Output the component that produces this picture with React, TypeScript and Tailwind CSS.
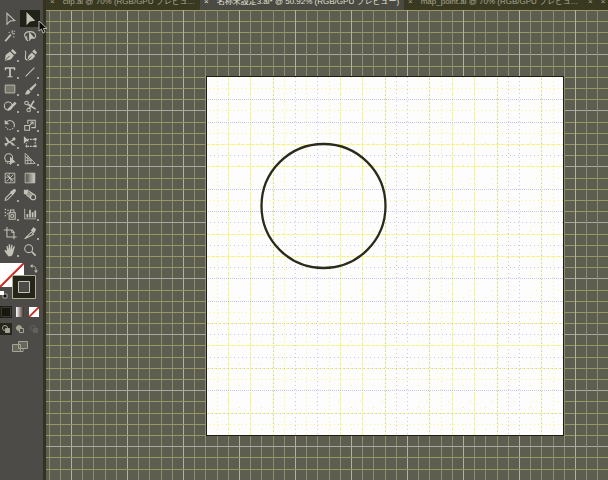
import type { ReactNode } from "react";

const UNIT = 11.2;
const BOARD = { x: 206, y: 77, size: 358 };

type Tool = { label: string; icon: ReactNode; more?: boolean; active?: boolean };

const line = { fill: "none", stroke: "currentColor", strokeWidth: 1.2 };

const groups: Tool[][] = [
  [
    { label: "Selection", icon: <path {...line} d="M4.500 1.500v12.500l3.500-3.600 5.500-.6z" /> },
    { label: "Direct selection", active: true, icon: <path d="M4 0v15l4-4.200 6-.8z" /> },
    {
      label: "Magic wand",
      icon: (
        <>
          <path {...line} strokeWidth="2" d="M2.500 14 9 6.500" />
          <path {...line} d="M10.500 1.500v3M13.500 5.500h-3M12.500 3l1-1M6.500 3.500l1 1M12 8.500l1 1" />
        </>
      ),
    },
    {
      label: "Lasso",
      icon: (
        <>
          <path {...line} d="M5 11C0 9 1 3 8 3s8 6.500 4 8M4.500 8.500c-2 2-1 4 1.500 5" />
          <path d="M7 3v11l2.500-2.800 4-.4z" />
        </>
      ),
    },
  ],
  [
    {
      label: "Pen",
      more: true,
      icon: (
        <>
          <path d="M2 14.500 3 8l5-4 4.500 4.500L9 13zM9 3l2-2 4.500 4.500-2 2z" />
          <path d="M2.500 14 7.500 9" stroke="#4c4b47" />
        </>
      ),
    },
    {
      label: "Curvature",
      icon: (
        <>
          <path d="M5 14.500 6 9l4-4 4 4-3.500 4zM10.500 4l2.500-2.500L16 5l-1.500 2.500z" />
          <path {...line} d="M4.500 14C0 12 5 8 2.500 3" />
          <path d="M5.500 14 9.500 9.500" stroke="#4c4b47" />
        </>
      ),
    },
    { label: "Type", more: true, icon: <path d="M2 2.500h12V6h-1.300l-.7-1.700H9v8.200l2 .5v1H5v-1l2-.5V4.300H4L3.300 6H2z" /> },
    { label: "Line segment", more: true, icon: <path {...line} d="M3 13 13 3" /> },
    {
      label: "Rectangle",
      more: true,
      icon: <path d="M2.500 3.500h11v9h-11z" fill="#77776a" stroke="currentColor" />,
    },
    {
      label: "Paintbrush",
      more: true,
      icon: <path d="M14.500 1.500 15.500 3 9.500 10 7 8zM6.200 8.500 8.700 11c-1 3-4 3.500-7 3 2-1 1.500-4.500 4.500-5.500z" />,
    },
    {
      label: "Shaper",
      more: true,
      icon: (
        <>
          <circle {...line} cx="6" cy="8" r="4.500" />
          <path d="M5 13.500 6 10.500 13.500 3l2 2L8 12.500z" />
        </>
      ),
    },
    {
      label: "Scissors",
      more: true,
      icon: (
        <>
          <circle {...line} cx="4" cy="4.500" r="2" />
          <circle {...line} cx="6.500" cy="12.500" r="2" />
          <path {...line} strokeWidth="1.800" d="m5.500 6 9 5.500M7 11l5.500-9" />
        </>
      ),
    },
  ],
  [
    {
      label: "Rotate",
      more: true,
      icon: (
        <>
          <path {...line} d="M4 4.500C8 1 13.500 4 13 9" />
          <path {...line} strokeDasharray="1.500 1.500" d="M13 9c-1 5-8 6-10 1" />
          <path d="M2 2v5h5z" />
        </>
      ),
    },
    {
      label: "Scale",
      more: true,
      icon: <path {...line} d="M2 8.500h5.500V14H2zM5.500 6.500v-4h8.500v8.500H9.500M7 9l4.500-4.500M8.500 4.500h3v3" />,
    },
    {
      label: "Width",
      more: true,
      icon: (
        <>
          <path d="M2 2c3 1 4 3 5 5 1.500 2 3 .5 4.500 2s1.500 2.500 3.500 3c-3 1-5-.5-6-2-1.500-1.500-3 0-4.500-2.500C3.500 5.500 3.500 4 2 2z" />
          <path {...line} d="M2 11.500 13 4.500" />
          <circle cx="12.500" cy="4.500" r="1.800" />
          <path d="M1.500 9.500 6 9l-2.500 4.500z" />
        </>
      ),
    },
    {
      label: "Free transform",
      icon: (
        <>
          <path {...line} strokeDasharray="2 1" d="M5 5h9v8H4V9" />
          <path d="M1 1v9l2.500-2.500L7 7zM13 3.500h2.500V6H13zM13 11.500h2.500V14H13zM3 12h2v2H3z" />
        </>
      ),
    },
    {
      label: "Shape builder",
      more: true,
      icon: (
        <>
          <circle {...line} cx="6.500" cy="6.500" r="4.500" />
          <path {...line} strokeDasharray="1.500 1" d="M3 10c1 4 7 4 9 1" />
          <path d="M8 5v10l2.500-2.800 4-.4z" />
        </>
      ),
    },
    {
      label: "Perspective grid",
      more: true,
      icon: <path {...line} strokeWidth="1" d="M2.500 1.500v12L14 13zM5.500 4v9.500M9 8v5.500M2.500 5.500l6 3M2.500 9.500H10" />,
    },
  ],
  [
    {
      label: "Mesh",
      icon: <path {...line} strokeWidth="1" d="M2.500 2.500h11v11h-11zM2.500 8c4-4 7 4 11 0M8 2.500c-4 4 4 7 0 11M4 4l8 8M12 4l-8 8" />,
    },
    {
      label: "Gradient",
      icon: <path d="M2.500 2.500h11v11h-11z" fill="url(#ramp)" stroke="currentColor" />,
    },
    {
      label: "Eyedropper",
      more: true,
      icon: (
        <>
          <path {...line} d="M2.500 14 3 11.500l6-6L11 7.500l-6 6z" />
          <path d="M8 4.500 9.500 3.500 12 1.500c2-1 3.500.5 2.500 2.500l-2 2.500-1 1.500z" />
        </>
      ),
    },
    {
      label: "Blend",
      icon: (
        <>
          <path d="M1 2h5v5H1z" />
          <path d="M5 5h5v5H5z" fill="#9a9a8c" />
          <circle {...line} cx="11.500" cy="10.500" r="3" />
          <path {...line} d="m6 3 7.500 5M3 7l6.500 5.500" />
        </>
      ),
    },
  ],
  [
    {
      label: "Symbol sprayer",
      more: true,
      icon: (
        <>
          <path {...line} d="M7 6.500h7v7.500H7zM8.500 6V3.500h4V6" />
          <circle {...line} cx="10.500" cy="10.300" r="1.800" />
          <path d="M2 2h1.500v1.500H2zM5 3h1.500v1.500H5zM2 5.500h1.500V7H2zM4.500 7H6v1.500H4.500zM2 9h1.500v1.500H2z" />
        </>
      ),
    },
    {
      label: "Column graph",
      more: true,
      icon: <path d="M1.500 2h1v11H15v1H1.500zM4 8h2v4H4zM7 3h2v9H7zM10 6h2v6h-2zM13 4h2v8h-2z" />,
    },
  ],
  [
    {
      label: "Artboard",
      icon: (
        <>
          <path {...line} d="M1 4.500h3.500M4.500 1v3.500h6l2 2.500v5.500h-8zM12.500 12.500h3M12.500 12.500v2.500" />
          <path {...line} strokeWidth="1" d="M10 4.500v3h3" />
        </>
      ),
    },
    {
      label: "Slice",
      more: true,
      icon: (
        <>
          <path {...line} d="M2 14.500 9.500 7l2.500 2.500z" />
          <path d="m9 5 3-4 3 3-2.500 4.500z" />
        </>
      ),
    },
    {
      label: "Hand",
      more: true,
      icon: (
        <path d="M4.500 9 4 3.500h1.200L6.500 7V1.500H8L8.500 7l1-5h1.300L10.500 7.500l2-4 1.200.5L12 10c-.5 3-1.500 4.500-3 5H6C4 12.500 3 11 1.500 8.500 2 7.500 3 7.700 4.500 9z" />
      ),
    },
    {
      label: "Zoom",
      icon: (
        <>
          <circle {...line} cx="6.500" cy="6.500" r="4.500" />
          <path {...line} strokeWidth="2" d="m10 10 4.500 4.500" />
        </>
      ),
    },
  ],
];

function ToolButton({ label, icon, more, active }: Tool) {
  return (
    <button
      type="button"
      aria-label={label}
      className={`relative flex h-[17px] w-5 items-center justify-center ${active ? "bg-[#222219]" : ""}`}
    >
      <svg viewBox="0 0 16 16" className="size-3.5" fill="currentColor">
        {icon}
      </svg>
      {more && <span className="absolute right-px bottom-px size-0.5 bg-[#a8a89a]" />}
    </button>
  );
}

function FillStroke() {
  return (
    <div className="relative h-11">
      <button type="button" aria-label="Fill" className="absolute top-[5px] left-0 h-6 w-6 bg-white">
        <svg viewBox="0 0 24 24" className="size-6">
          <path d="M0 24 24 0" stroke="#cc2a20" strokeWidth="2" />
        </svg>
      </button>
      <button type="button" aria-label="Swap fill and stroke" className="absolute top-[5px] left-[29px]">
        <svg viewBox="0 0 10 10" className="size-2.5" fill="#bcbcae">
          <path d="M1 3 3.500 1v4zM5 7.500h4L7 10z" />
          <path d="M3 3c3 0 4 1 4 5" fill="none" stroke="#bcbcae" />
        </svg>
      </button>
      <button type="button" aria-label="Stroke" className="absolute top-[17px] left-3">
        <svg viewBox="0 0 24 24" className="size-6" fill="none">
          <path d="M.5.5h23v23H.5z" fill="#25251b" stroke="#b0b08e" />
          <path d="M6.500 6.500h11v11h-11z" fill="#4c4b47" stroke="#c4c4b4" />
        </svg>
      </button>
      <button type="button" aria-label="Default fill and stroke" className="absolute top-[33px] left-0">
        <svg viewBox="0 0 8 8" className="size-2">
          <path d="M3 3h4v4H3z" fill="#111" stroke="#aaa" />
          <path d="M0 0h4v4H0z" fill="#fff" />
        </svg>
      </button>
    </div>
  );
}

function ModeButtons() {
  return (
    <>
      <div className="mt-1 flex gap-0.5">
        <button type="button" aria-label="Color" className="flex h-3 w-3 items-center justify-center bg-[#20201a]">
          <span className="size-2.5 border border-[#3a3a2e] bg-[#17170f]" />
        </button>
        <button type="button" aria-label="Gradient fill" className="flex h-3 w-3 items-center justify-center">
          <span className="h-2.5 w-2 bg-linear-to-r from-white to-[#3a3028]" />
        </button>
        <button type="button" aria-label="None" className="flex h-3 w-3 items-center justify-center">
          <svg viewBox="0 0 8 8" className="size-2.5 bg-white">
            <path d="M0 8 8 0" stroke="#cc2a20" strokeWidth="1.500" />
          </svg>
        </button>
      </div>
      <div className="mt-[5px] flex gap-0.5 text-[#a4a496]">
        {["Draw normal", "Draw behind", "Draw inside"].map((label, i) => (
          <button
            key={label}
            type="button"
            aria-label={label}
            className={`flex h-3 w-3 items-center justify-center ${i === 0 ? "bg-[#26261d]" : ""} ${i === 2 ? "opacity-25" : ""}`}
          >
            <svg viewBox="0 0 10 10" className="size-2.5">
              <circle cx="4" cy="4" r="2.500" fill={i === 1 ? "currentColor" : "none"} stroke="currentColor" />
              <path d="M4.500 4.500h4v4h-4z" fill={i === 1 ? "#4c4b47" : "currentColor"} stroke="currentColor" />
            </svg>
          </button>
        ))}
      </div>
      <button type="button" aria-label="Screen mode" className="mt-1 ml-3 flex h-4 w-4 items-center text-[#a4a496]">
        <svg viewBox="0 0 16 14" className="h-3.5 w-4" fill="#66665a" stroke="currentColor">
          <path d="M6.500 1.500h9v7h-9zM.5 4.500h8v7h-8z" />
          <path d="M11 11.500H8M11 9v2.500" />
        </svg>
      </button>
    </>
  );
}

function Toolbar() {
  return (
    <aside className="flex w-[46px] shrink-0 flex-col border-r-3 border-[#353320] bg-[#4c4b47] pt-2.5 text-[#c2c2b6]">
      <div className="flex flex-col gap-0.5">
        {groups.map((tools, i) => (
          <div key={i} className="flex w-10 flex-wrap">
            {tools.map((tool) => (
              <ToolButton key={tool.label} {...tool} />
            ))}
          </div>
        ))}
      </div>
      <FillStroke />
      <ModeButtons />
    </aside>
  );
}

const tabs = [
  { name: "clip.ai @ 70% (RGB/GPU プレビュ...", width: "w-[154px]" },
  { name: "名称未設定3.ai* @ 50.92% (RGB/GPU プレビュー)", width: "w-[204px]", active: true },
  { name: "map_point.ai @ 70% (RGB/GPU プレビュ...", width: "w-[180px]" },
  { name: "×", width: "w-10" },
];

function Tabs() {
  return (
    <nav className="flex h-2.5 items-end overflow-hidden bg-[#393820] text-[8px] leading-4 text-[#a8a894]">
      {tabs.map((tab) => (
        <button
          key={tab.name}
          type="button"
          className={`flex shrink-0 gap-2 pl-1 whitespace-nowrap ${tab.width} ${tab.active ? "bg-[#4a4a42] text-[#e0e0d4]" : ""}`}
        >
          <span>×</span>
          <span>{tab.name}</span>
        </button>
      ))}
    </nav>
  );
}

// Grid lines inside the artboard, one letter per line:
// Y/L/M strong yellow, lavender or both, y/l faint, "." almost invisible.
const COLUMNS = "yY.Y.MylylyY.Y.Mll.MyY.Y.Mll.My";
const ROWS = "yLyLyYlY.LyLlYlYlL.LyMlYlMyL.My";

const YELLOW = "#f6f47c";
const LAVENDER = "#c6c4f0";

const strokes: Record<string, { color: string; dash: string }[]> = {
  Y: [{ color: YELLOW, dash: "4 1" }],
  L: [{ color: LAVENDER, dash: "1 1" }],
  M: [
    { color: YELLOW, dash: "2 2" },
    { color: LAVENDER, dash: "0 2 1 1" },
  ],
  y: [{ color: YELLOW, dash: "1 3" }],
  l: [{ color: LAVENDER, dash: "1 3" }],
  ".": [{ color: YELLOW, dash: "1 21" }],
};

const columnAt = (i: number) => Math.floor(BOARD.x - 0.2 + i * UNIT) + 0.5;
const rowAt = (i: number) => Math.floor(BOARD.y + 0.2 + i * UNIT) + 0.5;

function Canvas() {
  const steps = Array.from({ length: 160 }, (_, i) => i - 15);
  const { x, y, size } = BOARD;

  return (
    <svg className="min-h-0 w-full flex-1 bg-[#5d5d50]" shapeRendering="crispEdges">
      <g transform="translate(-46 -10)">
        {steps.map((i) => (
          <g key={i}>
            <path d={`M${columnAt(i)} 0V1800`} stroke={(i + 17) % 5 === 0 ? "#b2b29e" : "#8c8c70"} />
            <path d={`M0 ${rowAt(i)}H1800`} stroke={(i + 17) % 5 === 0 ? "#a8a8a0" : "#989864"} />
          </g>
        ))}
        <rect x={x} y={y} width={size} height={size} fill="#fdfdfe" />
        {[...COLUMNS].map((kind, i) =>
          strokes[kind].map(({ color, dash }) => (
            <path
              key={`${i}${color}`}
              d={`M${columnAt(i + 1)} ${y}v${size}`}
              stroke={color}
              strokeDasharray={dash}
            />
          ))
        )}
        {[...ROWS].map((kind, i) =>
          strokes[kind].map(({ color, dash }) => (
            <path
              key={`${i}${color}`}
              d={`M${x} ${rowAt(i + 1)}h${size}`}
              stroke={color}
              strokeDasharray={dash}
            />
          ))
        )}
        <rect x={x + 0.5} y={y - 0.5} width={size - 1} height={size + 1} fill="none" stroke="#1c1c14" />
        <circle
          cx="323.500"
          cy="206"
          r="62"
          fill="none"
          stroke="#2b2b1a"
          strokeWidth="2.300"
          shapeRendering="geometricPrecision"
        />
      </g>
    </svg>
  );
}

export default function App() {
  return (
    <div className="relative flex min-h-screen overflow-hidden bg-[#5d5d50] font-['Liberation_Sans','Noto_Sans_CJK_JP',sans-serif]">
      <svg className="absolute size-0" aria-hidden="true">
        <linearGradient id="ramp">
          <stop offset="0" stopColor="#4c4b47" />
          <stop offset="1" stopColor="#d0d0c0" />
        </linearGradient>
      </svg>
      <Toolbar />
      <main className="flex min-w-0 flex-1 flex-col">
        <Tabs />
        <Canvas />
      </main>
      <svg viewBox="0 0 10 14" className="absolute top-5 left-[38px] h-3.5 w-2.5">
        <path d="M1 1v10l2.500-2L5 13l2-1-1.500-3.500H9z" fill="#0c0c08" stroke="#d8d8c8" strokeWidth=".8" />
      </svg>
    </div>
  );
}
